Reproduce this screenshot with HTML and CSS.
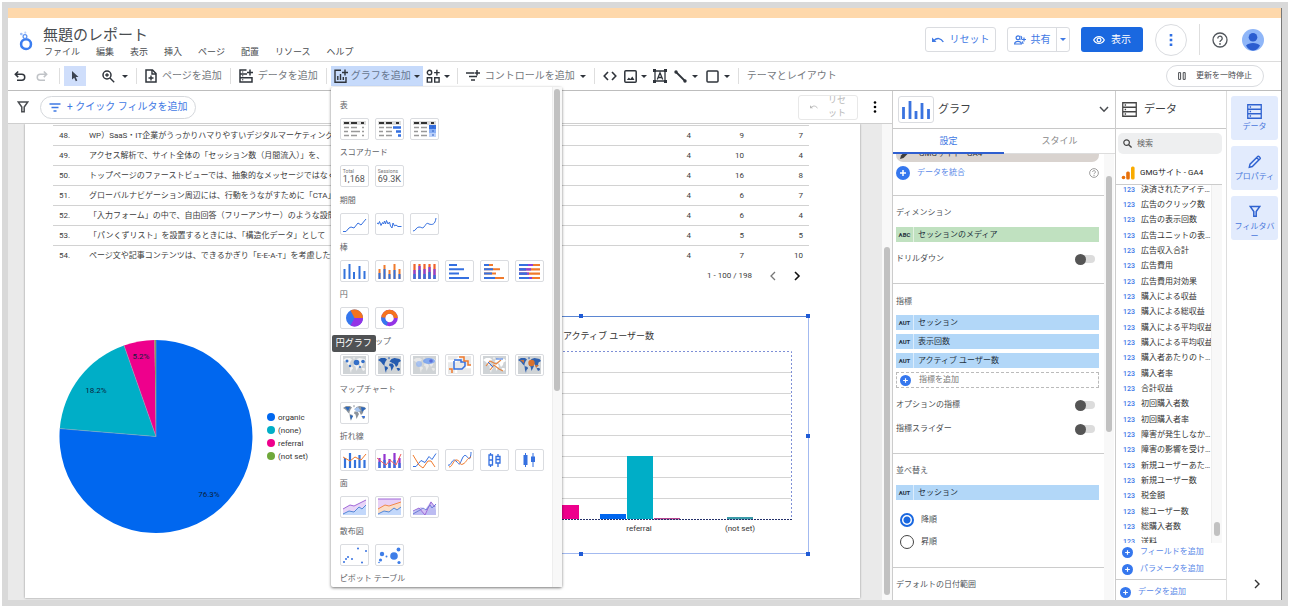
FILE: index.html
```
<!DOCTYPE html>
<html lang="ja">
<head>
<meta charset="utf-8">
<title>無題のレポート</title>
<link rel="stylesheet" href="styles.css">
</head>
<body>
<svg class="defs" aria-hidden="true">
  <symbol id="plus" viewBox="0 0 14 14"><circle cx="7" cy="7" r="7" fill="#3577ee"/><path d="M7 4v6M4 7h6" stroke="#fff" stroke-width="1.5"/></symbol>
  <symbol id="help" viewBox="0 0 16 16"><circle cx="8" cy="8" r="7" fill="none" stroke="currentColor" stroke-width="1.3"/><path d="M5.8 6.4a2.2 2.2 0 1 1 3.4 1.8C8.3 8.800 8 9.100 8 10" fill="none" stroke="currentColor" stroke-width="1.300"/><circle cx="8" cy="11.900" r=".9" fill="currentColor"/></symbol>
  <symbol id="undo" viewBox="0 0 12 12"><path d="M4.200 1.500L1.300 4.300l2.900 2.800M1.500 4.300h6.300a2.900 2.900 0 0 1 0 5.900H3" fill="none" stroke="currentColor" stroke-width="1.500"/></symbol>
  <symbol id="revert" viewBox="0 0 12 8"><path d="M0 1.500l0 4.500h4.500z" fill="currentColor"/><path d="M2 4.500C5 1.500 9 2 11.300 6" fill="none" stroke="currentColor" stroke-width="1.400"/></symbol>
  <symbol id="db" viewBox="0 0 14 14"><path d="M.7.700h12.600v12.600H.7zM.7 4.900h12.600M.7 9.100h12.600" fill="none" stroke="currentColor" stroke-width="1.200"/><path d="M2.500 2.800h1.300M2.500 7h1.300M2.500 11.200h1.300" stroke="currentColor" stroke-width="1.300"/></symbol>
  <symbol id="funnel" viewBox="0 0 12 12"><path d="M1.200 1h9.600L7.200 6v4.800H4.800V6z" fill="none" stroke="currentColor" stroke-width="1.500"/></symbol>
  <symbol id="world" viewBox="0 0 27 20"><path d="M2 5l3-2 4 0 2 1.500-1.500 2-1 2.500 0 2L6.500 9 5 7z M8.500 11l3 1 .5 1.500L10.500 15 10 18 9 15z M12 2.500l2 0-1 2z M13.500 8.500l3 0 1.500 2.500-1.500 3-1 2-1-4.500-1.500-1z M13.500 6.500L15.500 4l3-1 5 1 1.500 2-2.500 1.500-.5 2.500-2 2-1.500-3-3-1.500z M20.500 13l3 0 .5 2-2 1z"/></symbol>
</svg>
<div class="frame">
  <div class="strip"></div>

  <header class="top">
    <svg class="logo" viewBox="0 0 14 20"><circle cx="7.500" cy="13.500" r="4.700" fill="none" stroke="#3b7df0" stroke-width="2.400"/><circle cx="6.500" cy="6.300" r="1.800" fill="none" stroke="#5b92f3" stroke-width="1.200"/><circle cx="3" cy="3.800" r="1.300" fill="#9dbdf7"/><circle cx="6.800" cy="2.500" r="1" fill="#b9d0fa"/></svg>
    <div class="heading">
      <h1>無題のレポート</h1>
      <nav class="menus"><button>ファイル</button><button>編集</button><button>表示</button><button>挿入</button><button>ページ</button><button>配置</button><button>リソース</button><button>ヘルプ</button></nav>
    </div>
    <div class="actions">
      <button class="box reset"><svg width="12" height="8"><use href="#revert"/></svg>リセット</button>
      <div class="split">
        <button class="share"><svg width="12" height="10" viewBox="0 0 12 10"><circle cx="4" cy="2.800" r="1.900" fill="none" stroke="currentColor" stroke-width="1.200"/><path d="M.6 9c0-3.500 6.800-3.500 6.800 0zM6.500 1a2 2 0 0 1 0 3.700M8 6.500c.8.500 1 1.400 1 2.500M10 2.500v4M8 4.500h4" fill="none" stroke="currentColor" stroke-width="1.200"/></svg>共有</button>
        <button class="more" aria-label="共有オプション"><i class="caret"></i></button>
      </div>
      <button class="view"><svg width="12" height="10" viewBox="0 0 12 10"><path d="M.7 5C3 .4 9 .4 11.300 5 9 9.600 3 9.600.7 5z" fill="none" stroke="currentColor" stroke-width="1.200"/><circle cx="6" cy="5" r="1.900" fill="none" stroke="currentColor" stroke-width="1.200"/></svg>表示</button>
      <button class="round" aria-label="その他"><svg width="4" height="14" viewBox="0 0 4 14"><path d="M.7 1h2.600v2.600H.7zM.7 5.700h2.600v2.600H.7zM.7 10.400h2.600V13H.7z" fill="#2f6fe4"/></svg></button>
      <span class="rule"></span>
      <button class="plain" aria-label="ヘルプを表示"><svg width="16" height="16"><use href="#help"/></svg></button>
      <button class="plain avatar" aria-label="アカウント"><svg width="22" height="22" viewBox="0 0 22 22"><circle cx="11" cy="11" r="11" fill="#8fb6f8"/><circle cx="11" cy="8.300" r="4.300" fill="#2b5dd0"/><path d="M4 16.500c2.500-3.500 11.500-3.500 14 0-2 4-5 5-7 5s-5-1-7-5z" fill="#2b5dd0"/></svg></button>
    </div>
  </header>

  <div class="tools">
    <button class="tool" aria-label="元に戻す"><svg width="12" height="12"><use href="#undo"/></svg></button>
    <button class="tool redo" aria-label="やり直す"><svg width="12" height="12" viewBox="0 0 12 12"><path d="M7.800 1.500l2.900 2.800-2.900 2.800M10.500 4.300H4.200a2.900 2.900 0 0 0 0 5.900H9" fill="none" stroke="currentColor" stroke-width="1.500"/></svg></button>
    <span class="rule"></span>
    <button class="tool pointer" aria-label="選択"><svg width="10" height="12" viewBox="0 0 10 12"><path d="M2 1l6.500 6H5.700l1.600 3.500-1.500.7L4.200 7.700 2 9.600z" fill="#3b4352"/></svg></button>
    <button class="tool zoom" aria-label="ズーム"><svg width="13" height="13" viewBox="0 0 13 13"><circle cx="5" cy="5" r="4" fill="none" stroke="currentColor" stroke-width="1.500"/><path d="M8 8l4.200 4.200M3.200 5h3.600M5 3.200v3.600" stroke="currentColor" stroke-width="1.400"/></svg><i class="caret"></i></button>
    <span class="rule"></span>
    <button class="tool"><svg width="12" height="14" viewBox="0 0 12 14"><path d="M1 1h6.500L11 4.500V13H1z" fill="none" stroke="currentColor" stroke-width="1.500"/><path d="M7 1v4h4M6 6.500v5M3.500 9h5" fill="none" stroke="currentColor" stroke-width="1.400"/></svg>ページを追加</button>
    <span class="rule"></span>
    <button class="tool"><svg width="14" height="14" viewBox="0 0 14 14"><path d="M7.500 1H1v12h12V8.700H1M1 4.900h7M13 8v5M11 .5v6M8 3.500h6" fill="none" stroke="currentColor" stroke-width="1.500"/><path d="M3 6.800h1.300M3 10.800h1.300M3 3h1.300" stroke="currentColor"/></svg>データを追加</button>
    <span class="rule"></span>
    <div class="picker">
      <button class="tool active"><svg width="14" height="14" viewBox="0 0 14 14"><path d="M7 1.200H1v12h11V8" fill="none" stroke="currentColor" stroke-width="1.400"/><path d="M3.800 7v4M6.500 5v6M9.300 8v3M11 .5v6M8 3.500h6" stroke="currentColor" stroke-width="1.400"/></svg>グラフを追加<i class="caret"></i></button>
      <div class="menu">
        <div class="menu-body">
          <section><h2>表</h2><div class="tiles">
            <button aria-label="表"><svg viewBox="0 0 27 20"><path d="M2 2h23v4H2z" fill="#ddd"/><path d="M3 4h5M10 4h6M20 4h3" stroke="#333" stroke-width="2"/><path d="M3 8.500h5M10 8.500h6M21 8.500h2M3 12.500h4M10 12.500h9M21 12.500h2M3 16.500h5M10 16.500h6M21 16.500h2" stroke="#999" stroke-width="1.500"/></svg></button>
            <button aria-label="表（棒付き）"><svg viewBox="0 0 27 20"><path d="M2 2h23v4H2z" fill="#ddd"/><path d="M3 4h5M10 4h6M20 4h3" stroke="#333" stroke-width="2"/><path d="M3 8.500h5M10 8.500h6M3 12.500h4M10 12.500h6M3 16.500h5M10 16.500h6" stroke="#999" stroke-width="1.500"/><path d="M17 8.500h8M20 12.500h5M22 16.500h3" stroke="#3570e0" stroke-width="2.400"/></svg></button>
            <button aria-label="表（ヒートマップ付き）"><svg viewBox="0 0 27 20"><path d="M2 2h23v4H2z" fill="#ddd"/><path d="M3 4h5M10 4h6M20 4h3" stroke="#333" stroke-width="2"/><path d="M3 8.500h5M10 8.500h6M3 12.500h4M10 12.500h6M3 16.500h5M10 16.500h6" stroke="#999" stroke-width="1.500"/><path d="M18 6h7v4h-7z" fill="#3570e0"/><path d="M18 10h7v4h-7z" fill="#8ab0f5"/><path d="M18 14h7v4h-7z" fill="#bdd2fa"/><path d="M21 8h2M21 12h2M21 16h2" stroke="#2f5fc0"/></svg></button>
          </div></section>
          <section><h2>スコアカード</h2><div class="tiles">
            <button><span class="score"><small>Total</small><b>1,168</b></span></button>
            <button><span class="score"><small>Sessions</small><b>69.3K</b></span></button>
          </div></section>
          <section><h2>期間</h2><div class="tiles line">
            <button aria-label="期間グラフ"><svg viewBox="0 0 27 20"><path d="M2 17.500h3l3-3.500 2-1 3 1 4-5 3 2 5-6" stroke="#3570e0"/></svg></button>
            <button aria-label="スパークライン"><svg viewBox="0 0 27 20"><path d="M1 9l1.500 1 1-2.500 1.500 4 1.500-3 1 1.500 1-3 1 3 1-3.500L12 10l1.500-2 1 4 1.500 2 1-5 1.500 3 1.500-1 2 1.500h3.500" stroke="#3570e0"/></svg></button>
            <button aria-label="平滑期間グラフ"><svg viewBox="0 0 27 20"><path d="M2 17c3 0 3-4 6-4s3 2 5 0 2-5 5-3c3 1 6 1 7-6" stroke="#3570e0"/></svg></button>
          </div></section>
          <section><h2>棒</h2><div class="tiles">
            <button aria-label="縦棒"><svg viewBox="0 0 27 20"><path d="M3.500 8v10M8.500 3v15M13 11v7M18.500 5v13M23.500 10v8" stroke="#3272dc" stroke-width="2"/></svg></button>
            <button aria-label="積み上げ縦棒"><svg viewBox="0 0 27 20"><path d="M3.500 8v10M8.500 4v14M13.500 9v9M18.500 3v15M23.500 8v10" stroke="#f07a2c" stroke-width="2"/><path d="M3.500 12v6M8.500 8v10M13.500 13v5M18.500 9v9M23.500 13v5" stroke="#3272dc" stroke-width="2"/></svg></button>
            <button aria-label="100% 積み上げ縦棒"><svg viewBox="0 0 27 20"><path d="M3.500 3v15M8.500 3v15M13.500 3v15M18.500 3v15M23.500 3v15" stroke="#f0622c" stroke-width="2.200"/><path d="M3.500 9v9M8.500 5v13M13.500 8v10M18.500 6v12M23.500 8v10" stroke="#8d3fd8" stroke-width="2.200"/><path d="M3.500 13v5M8.500 9v9M13.500 13v5M18.500 11v7M23.500 14v4" stroke="#3272dc" stroke-width="2.200"/></svg></button>
            <button aria-label="横棒"><svg viewBox="0 0 27 20"><path d="M3 4h8M3 8.300h15M3 12.600h10M3 17h20" stroke="#3570e0" stroke-width="2"/></svg></button>
            <button aria-label="積み上げ横棒"><svg viewBox="0 0 27 20"><path d="M3 4h9M3 8.300h16M3 12.600h12M3 17h20" stroke="#f07a2c" stroke-width="2"/><path d="M3 4h5M3 8.300h9M3 12.600h8M3 17h11" stroke="#3570e0" stroke-width="2"/></svg></button>
            <button aria-label="100% 積み上げ横棒"><svg viewBox="0 0 27 20"><path d="M3 4h21M3 8.300h21M3 12.600h21M3 17h21" stroke="#f07a2c" stroke-width="2.200"/><path d="M3 4h14M3 8.300h12M3 12.600h10M3 17h13" stroke="#8d3fd8" stroke-width="2.200"/><path d="M3 4h9M3 8.300h7M3 12.600h8M3 17h10" stroke="#3570e0" stroke-width="2.200"/></svg></button>
          </div></section>
          <section><h2>円</h2><div class="tiles">
            <button aria-describedby="tip" aria-label="円グラフ"><svg viewBox="0 0 27 20"><circle cx="13.500" cy="10" r="8.500" fill="#3577ee"/><path d="M13.500 10L9.500 2.500a8.500 8.500 0 0 1 12.500 7.500z" fill="#f5731d"/><path d="M13.500 10H22a8.500 8.500 0 0 1-12.500 7.500z" fill="#9334e6"/></svg></button>
            <button aria-label="ドーナツ"><svg viewBox="0 0 27 20"><g fill="none" stroke-width="4"><circle cx="13.500" cy="10" r="6.300" stroke="#9334e6"/><path d="M7.200 10a6.300 6.300 0 0 1 12.600 0" stroke="#f5731d"/><path d="M7.200 9.500a6.300 6.300 0 0 0 4 6.400" stroke="#3577ee"/></g></svg></button>
            <span class="tip" id="tip" role="tooltip">円グラフ</span>
          </div></section>
          <section><h2>Google マップ</h2><div class="tiles">
            <button aria-label="バブルマップ"><svg viewBox="0 0 27 20"><path class="sea" d="M2 1h23v18H2z"/><use href="#world" fill="#f3f3f3"/><g fill="#3570c8"><circle cx="6" cy="6" r="1.500"/><circle cx="15.500" cy="7.500" r="2.800"/><circle cx="9" cy="11" r="1.200"/><circle cx="22" cy="6.500" r="1.800"/><circle cx="19" cy="12" r="1"/></g></svg></button>
            <button aria-label="塗り分けマップ"><svg viewBox="0 0 27 20"><path class="sea" d="M2 1h23v18H2z"/><use href="#world" fill="#245bb0"/></svg></button>
            <button aria-label="ヒートマップ"><svg viewBox="0 0 27 20"><path class="sea" d="M2 1h23v18H2z"/><use href="#world" fill="#e8e8e8"/><ellipse cx="18" cy="6" rx="6" ry="3" fill="#6c9bf0" opacity=".8"/><circle cx="8" cy="9" r="3" fill="#8fb3f5" opacity=".7"/><circle cx="20" cy="6" r="1.800" fill="#5b6fd8"/></svg></button>
            <button aria-label="線マップ"><svg viewBox="0 0 27 20"><path d="M2 1h23v18H2z" fill="#e9e9e9"/><path d="M2 6h8l4-4M20 12h5M10 14v4" fill="none" stroke="#fff" stroke-width="2.500"/><path d="M8 6v8h8l3-3V7h-4V5H8" fill="none" stroke="#3570e0" stroke-width="1.500"/><path d="M13 2h5v4h4v4h3M6 18v-4H3" fill="none" stroke="#f07a2c" stroke-width="1.500"/></svg></button>
            <button aria-label="複合マップ"><svg viewBox="0 0 27 20"><path class="sea" d="M2 1h23v18H2z"/><use href="#world" fill="#fff"/><path d="M5 11l4-5 6 3 5-4M9 15l4-5 5 4 4 2" fill="none" stroke="#e58744" stroke-width="1.200"/><path d="M7 7l5 5M15 4h7" stroke="#3570e0"/></svg></button>
            <button aria-label="円マップ"><svg viewBox="0 0 27 20"><path class="sea" d="M2 1h23v18H2z"/><use href="#world" fill="#3162b0"/><circle cx="15.500" cy="8" r="3.200" fill="#d9712e"/><path d="M4 5h4v3zM19 10h4l-3 3z" fill="#c7733d"/></svg></button>
          </div></section>
          <section><h2>マップチャート</h2><div class="tiles">
            <button aria-label="マップチャート"><svg viewBox="0 0 27 20"><use href="#world" fill="#8d949c"/><path d="M4 4h5L7 8zM20 4l5 1-4 4zM9 12l3 1-2 4z" fill="#2a67bd"/><path d="M13 6l4-2 3 4-4 1z" fill="#a8c5ee"/><path d="M20.500 13h3.500l-1 2.500z" fill="#3570e0"/></svg></button>
          </div></section>
          <section><h2>折れ線</h2><div class="tiles line">
            <button aria-label="複合グラフ"><svg viewBox="0 0 27 20"><path d="M4 8v10M9 3v15M14 10v8M18.500 5v13M23.500 10v8" stroke="#3272dc" stroke-width="2.200"/><path d="M2 7l7 4 5-4 6 3 5-6" stroke="#f07a2c"/></svg></button>
            <button aria-label="積み上げ複合グラフ"><svg viewBox="0 0 27 20"><path d="M3.500 8v10M8.500 4v14M13.500 9v9M18.500 3v15M23.500 8v10" stroke="#9334d0" stroke-width="2.200"/><path d="M3.500 12v6M8.500 10v8M13.500 13v5M18.500 10v8M23.500 13v5" stroke="#3272dc" stroke-width="2.200"/><path d="M1 8l5 4 4 3 4-5 6 5 5-11" stroke="#f0605c"/></svg></button>
            <button aria-label="折れ線グラフ"><svg viewBox="0 0 27 20"><path d="M2 16.500h3l5-6 4 2 4-6 3 3 4-6" stroke="#3570e0"/><path d="M2 5l6 10 4 3 5-7h3l4 6" stroke="#f07a2c"/></svg></button>
            <button aria-label="平滑折れ線グラフ"><svg viewBox="0 0 27 20"><path d="M2 15c3 2 4-8 8-4s3 5 6-2 5-2 7 0c1 0 2-3 2-7" stroke="#3570e0"/><path d="M3 17c4 0 4-8 8-7s2 6 6 4 3-5 8-7" stroke="#f07a2c"/></svg></button>
            <button aria-label="箱ひげ図"><svg viewBox="0 0 27 20"><path d="M9.500 3v2M9.500 15v2M8 5h3.500v10H8zM8 10h3.500M17 4v2M17 13v4M15 6.500h4V13h-4zM15 9.500h4" stroke="#3570e0" stroke-width="1.300"/></svg></button>
            <button aria-label="ローソク足"><svg viewBox="0 0 27 20"><path d="M9.500 3v14M17 3v14" stroke="#3570e0"/><path d="M7.500 5h4v10h-4zM15 6.500h4V12h-4z" fill="#3570e0"/></svg></button>
          </div></section>
          <section><h2>面</h2><div class="tiles line">
            <button aria-label="面グラフ"><svg viewBox="0 0 27 20"><path d="M2 12l7-4 4 1 12-6v15H2z" fill="#e8d5f7"/><path d="M2 17l6-3 5 1 5-5 3 2 4-4v10H2z" fill="#c3d8fb"/><path d="M2 12l7-4 4 1 12-6" stroke="#a068d8"/><path d="M2 17l6-3 5 1 5-5 3 2 4-4" stroke="#5488d8"/></svg></button>
            <button aria-label="100% 面グラフ"><svg viewBox="0 0 27 20"><path d="M2 2h23v16H2z" fill="#e8d0f5"/><path d="M2 12l7-4 4 1 12-4v13H2z" fill="#fbdcc5"/><path d="M2 17l6-3 5 1 5-4 3 2 4-3v8H2z" fill="#c3d8fb"/><path d="M2 2h23" stroke="#a068d8"/><path d="M2 12l7-4 4 1 12-4" stroke="#f0884c"/><path d="M2 17l6-3 5 1 5-4 3 2 4-3" stroke="#5488d8"/></svg></button>
            <button aria-label="重ね面グラフ"><svg viewBox="0 0 27 20"><path d="M2 16l5-4 3-2 4 3 6-9 5 9v5H2z" fill="#d3c1f4"/><path d="M2 14l6-3 6 7 6-9 5-1v10H2z" fill="#aeb9f0" opacity=".6"/><path d="M2 14l6-3 6 7 6-13 4 5" stroke="#9a6bd8"/><path d="M2 17l7-4 3-2 3 2 4-5 2 3 4-4" stroke="#6f7ed8"/></svg></button>
          </div></section>
          <section><h2>散布図</h2><div class="tiles">
            <button aria-label="散布図"><svg viewBox="0 0 27 20"><g fill="#3570e0"><circle cx="3" cy="17" r="1"/><circle cx="5" cy="14" r="1"/><circle cx="7" cy="12" r="1"/><circle cx="11" cy="14" r="1"/><circle cx="17" cy="3.500" r="1"/><circle cx="25" cy="6" r="1"/><circle cx="21" cy="17.500" r="1"/></g></svg></button>
            <button aria-label="バブル"><svg viewBox="0 0 27 20"><g fill="#3f7ee8"><circle cx="6" cy="9" r="2.200"/><circle cx="4.500" cy="15" r="1.600"/><circle cx="3" cy="17.500" r=".8"/><circle cx="10.500" cy="11.500" r="1"/><circle cx="18" cy="11" r="3.800"/><circle cx="22.500" cy="4.500" r="1.900"/><circle cx="23" cy="17.500" r="1.600"/></g></svg></button>
          </div></section>
          <h2 class="last">ピボット テーブル</h2>
        </div>
        <div class="track menu-track"><i></i></div>
      </div>
    </div>
    <button class="tool tight" aria-label="コミュニティ ビジュアリゼーション"><svg width="14" height="14" viewBox="0 0 14 14"><circle cx="3.500" cy="3.500" r="2.200" fill="none" stroke="currentColor" stroke-width="1.400"/><path d="M1.300 8.700h4.400v4.400H1.300zM8.700 8.700h4.400v4.400H8.700zM10.900 .8v5.600M8.100 3.600h5.600" fill="none" stroke="currentColor" stroke-width="1.400"/></svg><i class="caret"></i></button>
    <span class="rule"></span>
    <button class="tool"><svg width="14" height="12" viewBox="0 0 14 12"><path d="M0 3h8M3 6.500h8M5 10h4M11 0v5.500M8.500 3H14" stroke="currentColor" stroke-width="1.500"/></svg>コントロールを追加<i class="caret"></i></button>
    <span class="rule"></span>
    <button class="tool" aria-label="URL の埋め込み"><svg width="14" height="10" viewBox="0 0 14 10"><path d="M5 1L1.200 5 5 9M9 1l3.800 4L9 9" fill="none" stroke="currentColor" stroke-width="1.600"/></svg></button>
    <button class="tool tight" aria-label="画像"><svg width="13" height="13" viewBox="0 0 13 13"><rect x=".8" y=".8" width="11.400" height="11.400" rx="1" fill="none" stroke="currentColor" stroke-width="1.500"/><path d="M2.800 10l2-2.600 1.500 1.600L8.300 6.500l2.200 3.500z" fill="currentColor"/></svg><i class="caret"></i></button>
    <button class="tool tight" aria-label="テキスト"><svg width="14" height="14" viewBox="0 0 14 14"><path d="M2 2h10v10H2zM4.300 10.500L7 3.700l2.700 6.800M5.300 8.500h3.400" fill="none" stroke="currentColor" stroke-width="1.300"/><path d="M0 0h3v3H0zM11 0h3v3h-3zM0 11h3v3H0zM11 11h3v3h-3z" fill="currentColor"/></svg></button>
    <button class="tool" aria-label="線"><svg width="13" height="13" viewBox="0 0 13 13"><path d="M1.500 1.500l10 10" stroke="currentColor" stroke-width="1.800"/><circle cx="2" cy="2" r="1.700" fill="currentColor"/><circle cx="11" cy="11" r="1.700" fill="currentColor"/></svg><i class="caret"></i></button>
    <button class="tool" aria-label="図形"><svg width="13" height="13" viewBox="0 0 13 13"><rect x="1" y="1" width="11" height="11" rx="1" fill="none" stroke="currentColor" stroke-width="1.500"/></svg><i class="caret"></i></button>
    <span class="rule"></span>
    <button class="tool">テーマとレイアウト</button>
    <button class="pause"><svg width="8" height="8" viewBox="0 0 8 8"><path d="M.6.6h2v6.800h-2zM5.200.6h2v6.800h-2z" fill="none" stroke="currentColor"/></svg>更新を一時停止</button>
  </div>

  <div class="workspace">
    <main class="editor">
      <div class="filters">
        <button class="plain" aria-label="フィルタ"><svg width="12" height="12"><use href="#funnel"/></svg></button>
        <button class="quick"><svg width="12" height="9" viewBox="0 0 12 9"><path d="M.5 1h11M2.500 4.500h7M4.500 8h3" stroke="currentColor" stroke-width="1.400"/></svg>+ クイック フィルタを追加</button>
        <button class="box filter-reset" disabled><svg width="8" height="6"><use href="#revert"/></svg><span>リセ<br>ット</span></button>
        <button class="plain kebab" aria-label="その他のオプション"><svg width="4" height="12" viewBox="0 0 4 12"><circle cx="2" cy="1.500" r="1.300"/><circle cx="2" cy="6" r="1.300"/><circle cx="2" cy="10.500" r="1.300"/></svg></button>
      </div>
      <div class="canvas">
        <div class="report">
          <table class="rows">
            <tr><td>48.</td><td>WP）SaaS・IT企業がうっかりハマりやすいデジタルマーケティング</td><td>4</td><td>9</td><td>7</td></tr>
            <tr><td>49.</td><td>アクセス解析で、サイト全体の「セッション数（月間流入）」を、</td><td>4</td><td>10</td><td>4</td></tr>
            <tr><td>50.</td><td>トップページのファーストビューでは、抽象的なメッセージではなく</td><td>4</td><td>16</td><td>8</td></tr>
            <tr><td>51.</td><td>グローバルナビゲーション周辺には、行動をうながすために「CTA」</td><td>4</td><td>6</td><td>7</td></tr>
            <tr><td>52.</td><td>「入力フォーム」の中で、自由回答（フリーアンサー）のような設問</td><td>4</td><td>6</td><td>4</td></tr>
            <tr><td>53.</td><td>「パンくずリスト」を設置するときには、「構造化データ」として</td><td>4</td><td>5</td><td>5</td></tr>
            <tr><td>54.</td><td>ページ文や記事コンテンツは、できるかぎり「E-E-A-T」を考慮した</td><td>4</td><td>7</td><td>10</td></tr>
          </table>
          <div class="pager"><span>1 - 100 / 198</span>
            <button class="plain prev" aria-label="前へ"><svg width="6" height="10" viewBox="0 0 6 10"><path d="M5 1L1 5l4 4" fill="none" stroke="currentColor" stroke-width="1.300"/></svg></button>
            <button class="plain" aria-label="次へ"><svg width="6" height="10" viewBox="0 0 6 10"><path d="M1 1l4 4-4 4" fill="none" stroke="currentColor" stroke-width="1.600"/></svg></button>
          </div>
          <div class="charts">
            <svg class="pie" viewBox="0 0 270 220" width="270" height="220">
              <path d="M103 106.500V10A96.500 96.500 0 1 1 6.800 98.600z" fill="#0067ef"/>
              <path d="M103 106.500L6.800 98.600A96.500 96.500 0 0 1 71 15.500z" fill="#00aec7"/>
              <path d="M103 106.500L71 15.500A96.500 96.500 0 0 1 101.500 10z" fill="#ee008c"/>
              <path d="M103 106.500L101.500 10H103z" fill="#7a9a40"/>
              <path d="M103 106.500V10M103 106.500L6.800 98.600M103 106.500L71 15.500" stroke="#8fa6b8" stroke-width=".6"/>
              <g class="pct"><text x="88" y="29">5.2%</text><text x="43" y="63">18.2%</text><text x="156" y="167">76.3%</text></g>
              <circle cx="218" cy="87" r="4" fill="#0067ef"/><circle cx="218" cy="100" r="4" fill="#00aec7"/><circle cx="218" cy="113" r="4" fill="#ee008c"/><circle cx="218" cy="126" r="4" fill="#6fa83a"/>
              <g class="key"><text x="225" y="90">organic</text><text x="225" y="103">(none)</text><text x="225" y="116">referral</text><text x="225" y="129">(not set)</text></g>
            </svg>
            <svg class="bars" viewBox="0 0 460 244" width="460" height="244">
              <path d="M3 3.500h454.500v237H3z" fill="#fff" stroke="#a3baf0"/>
              <path d="M3 3.500h454" stroke="#5b86d2"/>
              <text class="series" x="212" y="26">アクティブ ユーザー数</text>
              <path d="M40 59.500h400M40 80.500h400M40 101.500h400M40 122.500h400M40 143.500h400M40 164.500h400M40 185.500h400" stroke="#d4d4d4"/>
              <path d="M202 192h26v14h-26z" fill="#ee008c"/><path d="M249 201h26v5h-26z" fill="#0067ef"/><path d="M276 143h26v63h-26z" fill="#00aec7"/><path d="M303 205h26v1.500h-26z" fill="#b5438d"/><path d="M376 204h26v2.500h-26z" fill="#3a9aa8"/>
              <path d="M40 38.500h400.500v168" fill="none" stroke="#7e8fd6" stroke-dasharray="2 2"/>
              <path d="M40 206.500h401" stroke="#23306a" stroke-dasharray="2 1"/>
              <g class="axis"><text x="288" y="218">referral</text><text x="389" y="218">(not set)</text></g>
              <path d="M228 1h4v4h-4zM455 1h4v4h-4zM455 121h4v4h-4zM228 239h4v4h-4zM455 239h4v4h-4z" fill="#1f5bd6"/>
            </svg>
          </div>
        </div>
        <div class="track canvas-track"><i></i></div>
      </div>
    </main>

    <aside class="props">
      <div class="panel-head"><span class="chart-icon"><svg width="28" height="20" viewBox="0 0 28 20"><path d="M1.500 7v12M8 1v18M14 11v8M20 3v16M26.500 9v10" stroke="#3a73df" stroke-width="2.800"/></svg></span><h3>グラフ</h3><button class="plain end" aria-label="グラフの種類"><svg width="10" height="7" viewBox="0 0 10 7"><path d="M1 1l4 4.200L9 1" fill="none" stroke="currentColor" stroke-width="1.500"/></svg></button></div>
      <div class="tabs" role="tablist"><button role="tab" aria-selected="true">設定</button><button role="tab" aria-selected="false">スタイル</button></div>
      <div class="scroll">
        <div class="settings">
          <div class="group source">
            <div class="source-pill"><svg width="10" height="10" viewBox="0 0 10 10"><path d="M0 10l1-3.500L6.500 1 9 3.500 3.500 9z" fill="#3d3d3d"/></svg>GMGサイト - GA4</div>
            <div class="row"><button class="link"><svg width="14" height="14"><use href="#plus"/></svg>データを統合</button><svg class="hint" width="10" height="10"><use href="#help"/></svg></div>
          </div>
          <div class="group dims">
            <h4>ディメンション</h4>
            <div class="chip green"><b>ABC</b><span>セッションのメディア</span></div>
            <label class="row toggle">ドリルダウン<input type="checkbox"></label>
          </div>
          <div class="group metrics">
            <h4>指標</h4>
            <div class="chips">
              <div class="chip"><b>AUT</b><span>セッション</span></div>
              <div class="chip"><b>AUT</b><span>表示回数</span></div>
              <div class="chip"><b>AUT</b><span>アクティブ ユーザー数</span></div>
              <button class="add"><svg width="11" height="11"><use href="#plus"/></svg>指標を追加</button>
            </div>
            <label class="row toggle">オプションの指標<input type="checkbox"></label>
            <label class="row toggle">指標スライダー<input type="checkbox"></label>
          </div>
          <div class="group sort">
            <h4>並べ替え</h4>
            <div class="chip"><b>AUT</b><span>セッション</span></div>
            <label class="radio"><input type="radio" name="order" checked>降順</label>
            <label class="radio"><input type="radio" name="order">昇順</label>
          </div>
          <div class="group range"><h4>デフォルトの日付範囲</h4></div>
        </div>
        <div class="track props-track"><i></i></div>
      </div>
    </aside>

    <aside class="data">
      <div class="panel-head"><svg width="15" height="15"><use href="#db"/></svg><h3>データ</h3></div>
      <label class="search"><svg width="9" height="9" viewBox="0 0 9 9"><circle cx="3.600" cy="3.600" r="2.800" fill="none" stroke="currentColor" stroke-width="1.200"/><path d="M5.700 5.700l2.900 2.900" stroke="currentColor" stroke-width="1.400"/></svg><input type="text" placeholder="検索" aria-label="検索"></label>
      <div class="ga"><svg width="14" height="14" viewBox="0 0 14 14"><circle cx="2.500" cy="11.500" r="1.800" fill="#e8710a"/><rect x="5.200" y="5.500" width="3.600" height="8" rx="1.500" fill="#e8710a"/><rect x="10" y=".5" width="3.600" height="13" rx="1.500" fill="#f9ab00"/></svg>GMGサイト - GA4</div>
      <div class="fields">
        <ul>
          <li>決済されたアイテ…</li><li>広告のクリック数</li><li>広告の表示回数</li><li>広告ユニットの表…</li><li>広告収入合計</li><li>広告費用</li><li>広告費用対効果</li><li>購入による収益</li><li>購入による総収益</li><li>購入による平均収益</li><li>購入による平均収益</li><li>購入者あたりのト…</li><li>購入者率</li><li>合計収益</li><li>初回購入者数</li><li>初回購入者率</li><li>障害が発生しなか…</li><li>障害の影響を受け…</li><li>新規ユーザーあた…</li><li>新規ユーザー数</li><li>税金額</li><li>総ユーザー数</li><li>総購入者数</li><li>送料</li>
        </ul>
        <div class="track fields-track"><i></i></div>
      </div>
      <div class="adds"><button class="link"><svg width="11" height="11"><use href="#plus"/></svg>フィールドを追加</button><button class="link"><svg width="11" height="11"><use href="#plus"/></svg>パラメータを追加</button></div>
      <div class="add-data"><button class="link"><svg width="11" height="11"><use href="#plus"/></svg>データを追加</button></div>
    </aside>

    <nav class="rail">
      <button><svg width="15" height="15"><use href="#db"/></svg>データ</button>
      <button><svg width="14" height="15" viewBox="0 0 14 14"><path d="M1.300 12.700l.7-3L10 1.700c.5-.5 2.800 1.600 2.300 2.300l-8 8zM8.500 3l2.500 2.500" fill="none" stroke="currentColor" stroke-width="1.400"/></svg>プロパティ</button>
      <button><svg width="12" height="15"><use href="#funnel" y="1" height="13" width="12"/></svg>フィルタバー</button>
      <button class="plain collapse" aria-label="折りたたむ"><svg width="6" height="10" viewBox="0 0 6 10"><path d="M1 1l4 4-4 4" fill="none" stroke="currentColor" stroke-width="1.400"/></svg></button>
    </nav>
  </div>
</div>
</body>
</html>
```
FILE: styles.css
```
* { box-sizing: border-box; }
body {
  margin: 0;
  padding: 2px 2px 3px;
  height: 100vh;
  background: #fff;
  color: #4a4d51;
  font-family: Roboto, "Noto Sans CJK JP", sans-serif;
  font-size: 8px;
  line-height: 12px;
}
h1, h2, h3, h4, ul { margin: 0; padding: 0; font-weight: 400; list-style: none; }
button, input { font: inherit; color: inherit; margin: 0; }
button { padding: 0; border: 0; background: none; white-space: nowrap; cursor: pointer; }
svg { display: block; flex: none; overflow: visible; }
.defs { position: absolute; width: 0; height: 0; }

.frame {
  height: 100%;
  border: 6px solid #d9d9d9;
  display: flex;
  flex-direction: column;
  background: #fff;
  box-shadow: inset -1px 0 #777;
  padding-right: 1px;
}
.strip { height: 10px; background: #fed8ab; flex: none; }
.plain, .box, .share, .more, .view, .round, .tool, .pause, .quick { display: flex; align-items: center; justify-content: center; }
.caret { border: 3px solid transparent; border-top-color: currentColor; border-bottom: 0; }

/* header */
.top { display: flex; flex: none; height: 44px; padding: 0 17px 0 10px; border-bottom: 1px solid #dcdcdc; }
.logo { width: 15px; height: 21px; margin: 12px 10px 0 0; }
.heading { padding-top: 7px; }
h1 { font-size: 15px; line-height: 20px; }
.menus { display: flex; gap: 16px; padding-left: 1px; font-size: 9px; line-height: 14px; }
.actions { display: flex; align-items: center; margin-left: auto; font-size: 10px; color: #3f79e4; }
.box { height: 25px; border: 1px solid #dadce0; border-radius: 3px; }
.reset { width: 71px; gap: 6px; }
.split { display: flex; width: 63px; height: 25px; margin: 0 11px; border: 1px solid #dadce0; border-radius: 3px; }
.share { flex: 1; gap: 5px; }
.more { width: 13px; border-left: 1px solid #dadce0; }
.view { width: 62px; height: 25px; gap: 6px; border-radius: 3px; background: #1a68e0; color: #fff; }
.round { width: 32px; height: 32px; margin: 0 12px; border: 1px solid #dadce0; border-radius: 50%; }
.rule { width: 1px; height: 16px; background: #dedede; }
.actions .rule { height: 31px; margin-right: 12px; }
.actions .plain { color: #50555b; }
.actions .avatar { margin-left: 14px; }

/* toolbar */
.tools { display: flex; align-items: center; flex: none; height: 29px; padding: 0 17px 0 2px; border-bottom: 1px solid #bdbdbd; font-size: 10px; }
.tools > .rule { margin: 0 4px; }
.tool { height: 20px; gap: 5px; padding: 0 4px; color: #74787d; }
.tool svg, .tool .caret { color: #2f343b; }
.tool.redo { margin: 0 3px 0 2px; }
.tool.redo svg { color: #c0c3c7; }
.pointer { width: 22px; margin-right: 12px; background: #cfdefb; }
.zoom { gap: 7px; }
.tool.tight { gap: 4px; padding: 0 3px; }
.picker { position: relative; }
.tool.active { padding: 0 3px; background: #c6dafb; color: #66768f; gap: 3px; }
.pause { width: 98px; height: 22px; gap: 10px; margin-left: auto; border: 1px solid #dadce0; border-radius: 11px; font-size: 8px; }

/* chart picker */
.menu { position: absolute; z-index: 5; top: 21px; left: 0; display: flex; width: 231px; height: calc(100vh - 109px); background: #fff; border-radius: 2px; box-shadow: 0 1px 3px #0008; color: #5f6368; }
.menu-body { display: flex; flex: 1; flex-direction: column; padding: 9px 0 0 9px; }
.menu-body section { flex: 1; }
.menu h2 { font-size: 8px; line-height: 20px; color: #5f6368; }
.menu .last { height: 18px; }
.tiles { position: relative; display: flex; gap: 6px; padding-top: 2px; }
.tiles button { width: 29px; height: 22px; border: 1px solid #dadce0; border-radius: 2px; background: #fff; }
.tiles svg { width: 27px; height: 20px; }
.line svg path:not([fill]) { fill: none; }
.sea { fill: #cfd3d6; }
.score { display: flex; flex-direction: column; padding-left: 2px; text-align: left; }
.score small { font-size: 5px; line-height: 6px; color: #777; }
.score b { font-size: 9px; line-height: 10px; font-weight: 400; color: #555; }
.tip { position: absolute; z-index: 1; top: 30px; left: -8px; padding: 0 4px; border-radius: 2px; background: #505254; color: #fff; font-size: 9px; line-height: 17px; white-space: nowrap; }

.track { flex: none; background: #f8f8f8; }
.track i { display: block; width: 6px; margin: 0 auto; border-radius: 3px; background: #c1c1c1; }
.menu-track { width: 10px; padding-top: 2px; border-left: 1px solid #eee; }
.menu-track i { height: 302px; }

/* work area */
.workspace { display: flex; flex: 1; min-height: 0; }
.editor { display: flex; flex: 1; flex-direction: column; min-width: 0; }
.filters { display: flex; align-items: center; flex: none; height: 33px; padding: 0 15px 0 9px; border-bottom: 1px solid #cfcfcf; }
.quick { height: 23px; gap: 6px; margin-left: 11px; padding: 0 8px; border: 1px solid #d5d8dc; border-radius: 12px; font-size: 10px; color: #3f79e4; }
.filter-reset { width: 60px; gap: 10px; margin-left: auto; border-color: #e8e8e8; color: #b8b8b8; font-size: 9px; line-height: 13px; background: none; }
.kebab { width: 4px; margin-left: 15px; }
.canvas { display: flex; flex: 1; min-height: 0; background: #eaeaea; padding-left: 17px; }
.report { flex: 1; min-width: 0; margin: 0 22px 2px 0; padding: 1px 51px 0 28px; background: #fff; box-shadow: 0 0 2px #0006; overflow: hidden; clip-path: inset(0 -3px -3px -3px); color: #3c3c3c; }
.rows { width: 100%; border-collapse: collapse; table-layout: fixed; }
.rows td { height: 20px; padding: 0 6px; border-top: 1px solid #d2d2d2; text-align: right; }
.rows td:nth-child(1) { width: 30px; text-align: left; }
.rows td:nth-child(2) { text-align: left; white-space: nowrap; overflow: hidden; }
.rows td:nth-child(3) { width: 60px; }
.rows td:nth-child(4) { width: 53px; }
.rows td:nth-child(5) { width: 59px; }
.pager { display: flex; align-items: center; justify-content: flex-end; height: 20px; padding-right: 9px; }
.pager button { margin-left: 18px; color: #111; }
.pager .prev { color: #777; }
.charts { display: flex; justify-content: space-between; margin: 27px -2px 0 0; }
.pie { margin-top: 17px; }
svg text { font-size: 8px; fill: #333; }
.pct, .axis { text-anchor: middle; }
svg .pct text { fill: #0b1f3d; }
svg .series { font-size: 9px; }
.canvas-track { width: 10px; padding-top: 123px; }
.canvas-track i { height: calc(100% - 5px); }

/* properties */
.props { display: flex; flex-direction: column; width: 223px; border-left: 1px solid #ccc; }
.panel-head { display: flex; align-items: center; flex: none; height: 38px; border-bottom: 1px solid #c8c8c8; }
.panel-head h3 { font-size: 11px; line-height: 16px; color: #3c4043; }
.props .panel-head { padding: 0 6px 0 5px; gap: 4px; }
.chart-icon { display: grid; place-items: center; width: 36px; height: 27px; border: 1px solid #dadce0; border-radius: 3px; }
.end { margin-left: auto; }
.tabs { display: flex; flex: none; height: 25px; font-size: 9px; }
.tabs button { flex: 1; color: #888; border-bottom: 1px solid #ddd; }
.tabs [aria-selected=true] { color: #3f79e4; border-bottom: 2px solid #2f5fd0; }
.scroll { display: flex; flex: 1; min-height: 0; overflow: hidden; }
.settings { flex: 1; }
.props-track { width: 10px; margin-right: 1px; padding-top: 22px; }
.props-track i { height: 256px; }
.group { padding: 0 5px 0 3px; border-bottom: 1px solid #ccc; }
.group h4 { font-size: 8px; line-height: 12px; color: #50555b; }
.row { display: flex; align-items: center; justify-content: space-between; }
.link { display: flex; align-items: center; gap: 7px; color: #5a89e8; }
.source { display: flow-root; height: 42px; }
.source-pill { display: flex; align-items: center; gap: 9px; height: 16px; margin-top: -8px; padding-left: 4px; border-radius: 0 0 7px 7px; background: #d9d3cf; color: #333; }
.source .row { margin-top: 4px; }
.hint { color: #888; }
.dims { height: 88px; padding-top: 11px; }
.chip { display: flex; height: 15px; background: #b2d7f8; color: #24313d; line-height: 15px; }
.chip b { width: 18px; border-right: 1px solid #fff8; font-size: 6px; text-align: center; }
.chip span { padding-left: 4px; }
.green { margin-top: 8px; background: #c0e1c0; }
.toggle { height: 24px; padding-right: 4px; }
.dims .toggle { margin-top: 5px; }
.toggle input { appearance: none; position: relative; width: 20px; height: 8px; border-radius: 4px; background: linear-gradient(90deg, #fff0 6px, #dcdcdc 6px); }
.toggle input::before { content: ""; position: absolute; top: -1px; left: 0; width: 11px; height: 11px; border-radius: 50%; background: #555; }
.metrics { height: 170px; padding-top: 12px; }
.chips { display: flex; flex-direction: column; gap: 4px; margin: 7px 0 5px; }
.add { display: flex; align-items: center; gap: 8px; height: 16px; padding-left: 3px; border: 1px dashed #bbb; color: #777; }
.sort { height: 114px; padding-top: 11px; }
.sort .chip { margin: 8px 0 9px; }
.radio { display: flex; align-items: center; gap: 7px; height: 22px; padding-left: 4px; }
.radio input { appearance: none; width: 14px; height: 14px; border: 1px solid #444; border-radius: 50%; }
.radio input:checked { border: 2px solid #1a68e0; background: radial-gradient(circle, #1a68e0 3px, #fff 4px); }
.range { padding-top: 11px; border: 0; }

/* data */
.data { display: flex; flex-direction: column; width: 112px; border-left: 1px solid #ccc; border-right: 1px solid #ddd; }
.data .panel-head { gap: 7px; padding-left: 6px; color: #444; }
.search { display: flex; align-items: center; flex: none; gap: 5px; height: 21px; margin: 4px 4px 0 2px; padding-left: 5px; border-radius: 5px; background: #eeeff0; color: #444; }
.search input { flex: 1; min-width: 0; padding: 0; border: 0; outline: 0; background: none; }
.search input::placeholder { color: #666; opacity: 1; }
.ga { display: flex; align-items: center; flex: none; gap: 5px; height: 31px; margin-right: 4px; padding: 8px 0 0 5px; border-bottom: 1px solid #ccc; color: #222; }
.fields { display: flex; flex: 1; min-height: 0; overflow: hidden; }
.fields ul { display: flex; flex: 1; min-width: 0; flex-direction: column; margin: -3px 0 -7px; }
.fields li { display: flex; align-items: center; flex: 1; min-height: 0; padding-left: 7px; color: #333; white-space: nowrap; }
.fields li::before { content: "123"; width: 18px; flex: none; color: #3b76e8; font-size: 7px; font-weight: 500; }
.fields-track { width: 11px; margin-right: 4px; padding-top: 337px; border-left: 1px solid #eee; }
.fields-track i { height: 14px; }
.adds { display: flex; flex: none; flex-direction: column; gap: 5px; height: 37px; padding: 3px 0 0 6px; border-bottom: 1px solid #ccc; }
.add-data { flex: none; height: 20px; padding: 6px 0 0 4px; }

/* rail */
.rail { display: flex; flex-direction: column; gap: 6px; width: 54px; padding: 5px 4px; }
.rail button:not(.collapse) { display: flex; flex-direction: column; align-items: center; gap: 3px; width: 47px; height: 44px; padding: 8px 2px 0; border-radius: 3px; background: #e2ebfd; color: #4a78dc; line-height: 10px; white-space: normal; word-break: break-all; }
.rail svg { color: #2f62d0; }
.rail .collapse { margin: auto 0 6px 6px; }
.rail .collapse svg { color: #333; }
```
